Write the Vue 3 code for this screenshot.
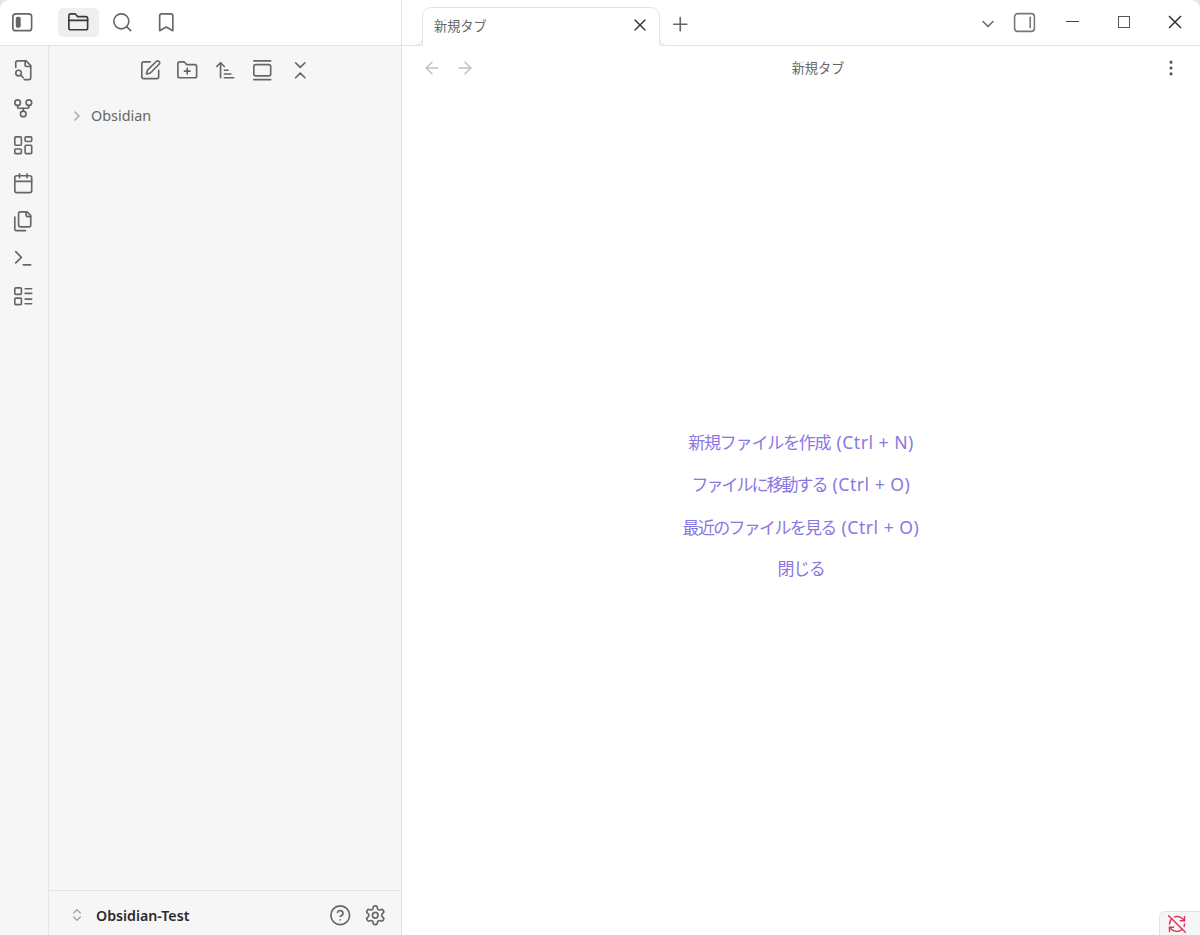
<script setup>
const icons = {
  sidebarLeft: '<rect x="2" y="3" width="20" height="18" rx="3"/><rect x="6" y="7" width="3.5" height="10" rx="1" fill="currentColor"/>',
  sidebarRight: '<rect x="2.5" y="3.5" width="19" height="17" rx="3"/><path d="M17.5 7v10"/>',
  folder: '<path d="M20 20a2 2 0 0 0 2-2V8a2 2 0 0 0-2-2h-7.9a2 2 0 0 1-1.69-.9L9.6 3.9A2 2 0 0 0 7.93 3H4a2 2 0 0 0-2 2v13a2 2 0 0 0 2 2Z"/><path d="M2 10h20"/>',
  search: '<circle cx="11" cy="11" r="8"/><path d="m21 21-4.3-4.3"/>',
  bookmark: '<path d="m19 21-7-4-7 4V5a2 2 0 0 1 2-2h10a2 2 0 0 1 2 2v16z"/>',
  fileSearch: '<path d="M13 22h5a2 2 0 0 0 2-2V7l-5-5H6a2 2 0 0 0-2 2v5"/><path d="M14 2v4a2 2 0 0 0 2 2h4"/><circle cx="7" cy="15" r="3"/><path d="m12 20-2.8-2.8"/>',
  fork: '<circle cx="12" cy="18" r="3"/><circle cx="6" cy="6" r="3"/><circle cx="18" cy="6" r="3"/><path d="M18 9v2c0 .6-.4 1-1 1H7c-.6 0-1-.4-1-1V9"/><path d="M12 12v3"/>',
  dashboard: '<rect x="3" y="3" width="7" height="9" rx="1"/><rect x="14" y="3" width="7" height="5" rx="1"/><rect x="14" y="12" width="7" height="9" rx="1"/><rect x="3" y="16" width="7" height="5" rx="1"/>',
  calendar: '<path d="M8 2v4"/><path d="M16 2v4"/><rect x="3" y="4" width="18" height="18" rx="2"/><path d="M3 10h18"/>',
  files: '<path d="M20 7h-3a2 2 0 0 1-2-2V2"/><path d="M9 18a2 2 0 0 1-2-2V4a2 2 0 0 1 2-2h7l4 4v10a2 2 0 0 1-2 2Z"/><path d="M3 7.6v12.8A1.6 1.6 0 0 0 4.6 22h9.8"/>',
  terminal: '<path d="m4 17 6-6-6-6"/><path d="M12 19h8"/>',
  list: '<rect x="3" y="3" width="7" height="7" rx="1"/><rect x="3" y="14" width="7" height="7" rx="1"/><path d="M14 4h7"/><path d="M14 9h7"/><path d="M14 15h7"/><path d="M14 20h7"/>',
  edit: '<path d="M12 3H5a2 2 0 0 0-2 2v14a2 2 0 0 0 2 2h14a2 2 0 0 0 2-2v-7"/><path d="M18.375 2.625a1 1 0 0 1 3 3l-9.013 9.014a2 2 0 0 1-.853.505l-2.873.84a.5.5 0 0 1-.62-.62l.84-2.873a2 2 0 0 1 .506-.852z"/>',
  folderPlus: '<path d="M12 10v6"/><path d="M9 13h6"/><path d="M20 20a2 2 0 0 0 2-2V8a2 2 0 0 0-2-2h-7.9a2 2 0 0 1-1.69-.9L9.6 3.9A2 2 0 0 0 7.93 3H4a2 2 0 0 0-2 2v13a2 2 0 0 0 2 2Z"/>',
  sort: '<path d="m3 8 4-4 4 4"/><path d="M7 4v16"/><path d="M11 12h4"/><path d="M11 16h7"/><path d="M11 20h10"/>',
  gallery: '<path d="M3 2h18"/><rect x="3" y="6" width="18" height="12" rx="2"/><path d="M3 22h18"/>',
  collapse: '<path d="m7 20 5-5 5 5"/><path d="m7 4 5 5 5-5"/>',
  chevronRight: '<path d="m9 18 6-6-6-6"/>',
  chevronDown: '<path d="m6 9 6 6 6-6"/>',
  upDown: '<path d="m7 15 5 5 5-5"/><path d="m7 9 5-5 5 5"/>',
  help: '<circle cx="12" cy="12" r="10"/><path d="M9.09 9a3 3 0 0 1 5.83 1c0 2-3 3-3 3"/><path d="M12 17h.01"/>',
  settings: '<path d="M12.22 2h-.44a2 2 0 0 0-2 2v.18a2 2 0 0 1-1 1.73l-.43.25a2 2 0 0 1-2 0l-.15-.08a2 2 0 0 0-2.73.73l-.22.38a2 2 0 0 0 .73 2.73l.15.1a2 2 0 0 1 1 1.72v.51a2 2 0 0 1-1 1.74l-.15.09a2 2 0 0 0-.73 2.73l.22.38a2 2 0 0 0 2.73.73l.15-.08a2 2 0 0 1 2 0l.43.25a2 2 0 0 1 1 1.73V20a2 2 0 0 0 2 2h.44a2 2 0 0 0 2-2v-.18a2 2 0 0 1 1-1.73l.43-.25a2 2 0 0 1 2 0l.15.08a2 2 0 0 0 2.73-.73l.22-.39a2 2 0 0 0-.73-2.73l-.15-.08a2 2 0 0 1-1-1.74v-.5a2 2 0 0 1 1-1.74l.15-.09a2 2 0 0 0 .73-2.73l-.22-.38a2 2 0 0 0-2.73-.73l-.15.08a2 2 0 0 1-2 0l-.43-.25a2 2 0 0 1-1-1.73V4a2 2 0 0 0-2-2z"/><circle cx="12" cy="12" r="3"/>',
  close: '<path d="M18 6 6 18"/><path d="m6 6 12 12"/>',
  plus: '<path d="M5 12h14"/><path d="M12 5v14"/>',
  left: '<path d="m12 19-7-7 7-7"/><path d="M19 12H5"/>',
  right: '<path d="M5 12h14"/><path d="m12 5 7 7-7 7"/>',
  more: '<circle cx="12" cy="12" r="1"/><circle cx="12" cy="5" r="1"/><circle cx="12" cy="19" r="1"/>',
  syncOff: '<path d="M21 8L18.74 5.74A9.75 9.75 0 0 0 12 3C11 3 10.03 3.16 9.13 3.47"/><path d="M8 16H3v5"/><path d="M3 12C3 9.51 4 7.26 5.64 5.64"/><path d="m3 16 2.26 2.26A9.75 9.75 0 0 0 12 21c2.49 0 4.74-1 6.36-2.64"/><path d="M21 12c0 1-.16 1.97-.47 2.87"/><path d="M21 3v5h-5"/><path d="M22 22 2 2"/>',
}

const ribbon = ['fileSearch', 'fork', 'dashboard', 'calendar', 'files', 'terminal', 'list']
const navButtons = ['edit', 'folderPlus', 'sort', 'gallery', 'collapse']
// tracking: kana runs are set tighter in some lines than others
const actions = [
  { label: '新規ファイルを作成', key: '(Ctrl + N)', tracking: -1.2 },
  { label: 'ファイルに移動する', key: '(Ctrl + O)', tracking: -2 },
  { label: '最近のファイルを見る', key: '(Ctrl + O)', tracking: -1.7 },
  { label: '閉じる', key: '', tracking: -1.3 },
]
</script>

<template>
  <div class="app">
    <aside class="left">
      <header class="left-head">
        <button class="btn toggle"><svg class="ic" viewBox="0 0 24 24" v-html="icons.sidebarLeft"></svg></button>
        <button class="btn tab-btn active"><svg class="ic dark" viewBox="0 0 24 24" v-html="icons.folder"></svg></button>
        <button class="btn tab-btn"><svg class="ic" viewBox="0 0 24 24" v-html="icons.search"></svg></button>
        <button class="btn tab-btn"><svg class="ic" viewBox="0 0 24 24" v-html="icons.bookmark"></svg></button>
      </header>
      <div class="left-body">
        <nav class="ribbon">
          <button v-for="name in ribbon" :key="name" class="btn ribbon-btn">
            <svg class="ic" viewBox="0 0 24 24" v-html="icons[name]"></svg>
          </button>
        </nav>
        <section class="explorer">
          <div class="nav-buttons">
            <button v-for="name in navButtons" :key="name" class="btn nav-btn">
              <svg class="ic" viewBox="0 0 24 24" v-html="icons[name]"></svg>
            </button>
          </div>
          <div class="tree">
            <div class="tree-item">
              <svg class="ic tiny" viewBox="0 0 24 24" v-html="icons.chevronRight"></svg>
              <span>Obsidian</span>
            </div>
          </div>
          <footer class="vault">
            <svg class="ic tiny" viewBox="0 0 24 24" v-html="icons.upDown"></svg>
            <span class="vault-name">Obsidian-Test</span>
            <button class="btn foot-btn"><svg class="ic" viewBox="0 0 24 24" v-html="icons.help"></svg></button>
            <button class="btn foot-btn"><svg class="ic" viewBox="0 0 24 24" v-html="icons.settings"></svg></button>
          </footer>
        </section>
      </div>
    </aside>

    <main class="main">
      <header class="tabbar">
        <div class="tab">
          <span class="tab-title">新規タブ</span>
          <svg class="ic small dark" viewBox="0 0 24 24" v-html="icons.close"></svg>
        </div>
        <button class="btn plus"><svg class="ic" viewBox="0 0 24 24" v-html="icons.plus"></svg></button>
        <div class="tabbar-right">
          <svg class="ic small" viewBox="0 0 24 24" v-html="icons.chevronDown"></svg>
          <svg class="ic side-toggle" viewBox="0 0 24 24" v-html="icons.sidebarRight"></svg>
          <div class="win-controls">
            <span class="win-btn"><i class="win-min"></i></span>
            <span class="win-btn"><i class="win-max"></i></span>
            <span class="win-btn"><svg class="win-close" viewBox="0 0 14 14"><path d="M1 1l12 12M13 1L1 13" /></svg></span>
          </div>
        </div>
      </header>

      <div class="view-head">
        <div class="view-nav">
          <svg class="ic small faded" viewBox="0 0 24 24" v-html="icons.left"></svg>
          <svg class="ic small faded" viewBox="0 0 24 24" v-html="icons.right"></svg>
        </div>
        <div class="view-title">新規タブ</div>
        <svg class="ic small more" viewBox="0 0 24 24" v-html="icons.more"></svg>
      </div>

      <div class="empty">
        <a v-for="item in actions" :key="item.label" class="empty-action">
          <span class="action-label" :style="{ letterSpacing: item.tracking + 'px' }">{{ item.label }}</span>
          <span v-if="item.key" class="action-key">{{ item.key }}</span>
        </a>
      </div>

      <div class="sync-badge">
        <svg class="ic sync" viewBox="0 0 24 24" v-html="icons.syncOff"></svg>
      </div>
    </main>
  </div>
</template>

<style>
html {
  background: #e6e6e6;
}
body {
  margin: 0;
}
</style>

<style scoped>
.app {
  display: flex;
  height: 935px;
  overflow: hidden;
  background: #fff;
  border-radius: 9px 9px 0 0;
  font-family: "Noto Sans", "Noto Sans CJK JP", sans-serif;
  color: #5c5c5c;
}
.btn {
  display: flex;
  align-items: center;
  justify-content: center;
  padding: 0;
  border: 0;
  background: none;
  color: inherit;
  border-radius: 5px;
}
.ic {
  width: 22.5px;
  height: 22.5px;
  flex: none;
  fill: none;
  stroke: currentColor;
  stroke-width: 1.75;
  stroke-linecap: round;
  stroke-linejoin: round;
  color: #666;
}
.ic.small {
  width: 20px;
  height: 20px;
}
.ic.tiny {
  width: 16px;
  height: 16px;
  color: #a8a8a8;
  stroke-width: 2.2;
}
.ic.dark {
  color: #3a3a3a;
}
.ic.faded {
  color: #c0c0c0;
}

.left {
  width: 402px;
  flex: none;
  display: flex;
  flex-direction: column;
  border-right: 1px solid #e3e3e3;
  box-sizing: border-box;
}
.left-head {
  height: 46px;
  flex: none;
  box-sizing: border-box;
  display: flex;
  align-items: center;
  gap: 3px;
  padding: 0 0 1px 0;
  border-bottom: 1px solid #e3e3e3;
}
.toggle {
  width: 44px;
  height: 29px;
  margin-right: 11px;
}
.tab-btn {
  width: 41px;
  height: 29px;
}
.tab-btn.active {
  background: #efefef;
}
.left-body {
  flex: 1;
  display: flex;
  min-height: 0;
  background: #f6f6f6;
}
.ribbon {
  width: 49px;
  flex: none;
  box-sizing: border-box;
  display: flex;
  flex-direction: column;
  align-items: center;
  gap: 7.7px;
  padding: 9.3px 2px 0 0;
  border-right: 1px solid #e3e3e3;
}
.ribbon-btn {
  width: 30px;
  height: 30px;
}
.explorer {
  flex: 1;
  min-width: 0;
  display: flex;
  flex-direction: column;
}
.nav-buttons {
  display: flex;
  justify-content: center;
  gap: 7.5px;
  padding-top: 9px;
}
.nav-btn {
  width: 30px;
  height: 30px;
}
.tree {
  flex: 1;
  padding: 19px 0 0 20px;
}
.tree-item {
  display: flex;
  align-items: center;
  gap: 6px;
  font-size: 14.4px;
  color: #666;
  line-height: 24px;
}
.vault {
  height: 45px;
  box-sizing: border-box;
  display: flex;
  align-items: center;
  padding: 4px 11px 0 20px;
  border-top: 1px solid #e3e3e3;
}
.vault-name {
  flex: 1;
  margin-left: 11px;
  font-size: 14.2px;
  font-weight: 600;
  color: #2b2b2b;
}
.foot-btn {
  width: 30px;
  height: 30px;
  margin-left: 5px;
}

.main {
  flex: 1;
  min-width: 0;
  position: relative;
  display: flex;
  flex-direction: column;
}
.tabbar {
  height: 46px;
  flex: none;
  box-sizing: border-box;
  display: flex;
  align-items: flex-end;
  padding-left: 20px;
  border-bottom: 1px solid #e3e3e3;
}
.tab {
  position: relative;
  width: 238px;
  height: 39px;
  margin-bottom: -1px;
  box-sizing: border-box;
  display: flex;
  align-items: center;
  justify-content: space-between;
  padding: 0 9px 3px 11px;
  background: #fff;
  border: 1px solid #e3e3e3;
  border-bottom: 1px solid #fff;
  border-radius: 9px 9px 0 0;
}
.tab::before,
.tab::after {
  content: "";
  position: absolute;
  bottom: -1px;
  width: 8px;
  height: 8px;
  border-bottom: 1px solid #e3e3e3;
}
.tab::before {
  left: -9px;
  border-right: 1px solid #e3e3e3;
  border-bottom-right-radius: 8px;
}
.tab::after {
  right: -9px;
  border-left: 1px solid #e3e3e3;
  border-bottom-left-radius: 8px;
}
.tab-title {
  font-size: 13.2px;
  color: #666;
}
.plus {
  width: 30px;
  height: 30px;
  margin: 0 0 6px 5px;
}
.tabbar-right {
  flex: 1;
  align-self: center;
  display: flex;
  align-items: center;
  justify-content: flex-end;
}
.ic.small + .side-toggle {
  margin-left: 14px;
  width: 25px;
  height: 25px;
  stroke-width: 1.5;
  color: #777;
}
.tabbar-right > .ic.small {
  margin-top: 2px;
}
.win-controls {
  display: flex;
  margin-left: 10px;
  margin-bottom: 2px;
}
.win-btn {
  width: 51px;
  height: 30px;
  display: flex;
  align-items: center;
  justify-content: center;
}
.win-min {
  display: block;
  width: 13px;
  height: 1.6px;
  background: #444;
}
.win-max {
  display: block;
  width: 10px;
  height: 10px;
  border: 1.6px solid #555;
}
.win-close {
  width: 14px;
  height: 14px;
  fill: none;
  stroke: #333;
  stroke-width: 1.5;
}

.view-head {
  height: 44px;
  flex: none;
  display: flex;
  align-items: center;
  padding: 0 19px 0 20px;
}
.view-nav {
  display: flex;
  gap: 13px;
  width: 62px;
}
.view-title {
  flex: 1;
  text-align: center;
  font-size: 13.2px;
  color: #666;
  padding: 0 9px 2px 0;
}
.more {
  color: #555;
}

.empty {
  flex: 1;
  display: flex;
  flex-direction: column;
  align-items: center;
  justify-content: center;
  padding-bottom: 14px;
}
.empty-action {
  display: flex;
  align-items: baseline;
  gap: 6px;
  height: 42.3px;
  line-height: 42.3px;
  color: #8b77e4;
}
.action-label {
  font-size: 17px;
}
.action-key {
  font-size: 17.6px;
  letter-spacing: 0.5px;
}
.sync-badge {
  position: absolute;
  right: -1px;
  bottom: -1px;
  width: 42px;
  height: 25px;
  box-sizing: border-box;
  display: flex;
  align-items: center;
  padding-left: 7px;
  background: #f6f6f6;
  border: 1px solid #e3e3e3;
  border-radius: 6px 0 0 0;
}
.ic.sync {
  width: 20px;
  height: 20px;
  color: #e0355a;
}
</style>
